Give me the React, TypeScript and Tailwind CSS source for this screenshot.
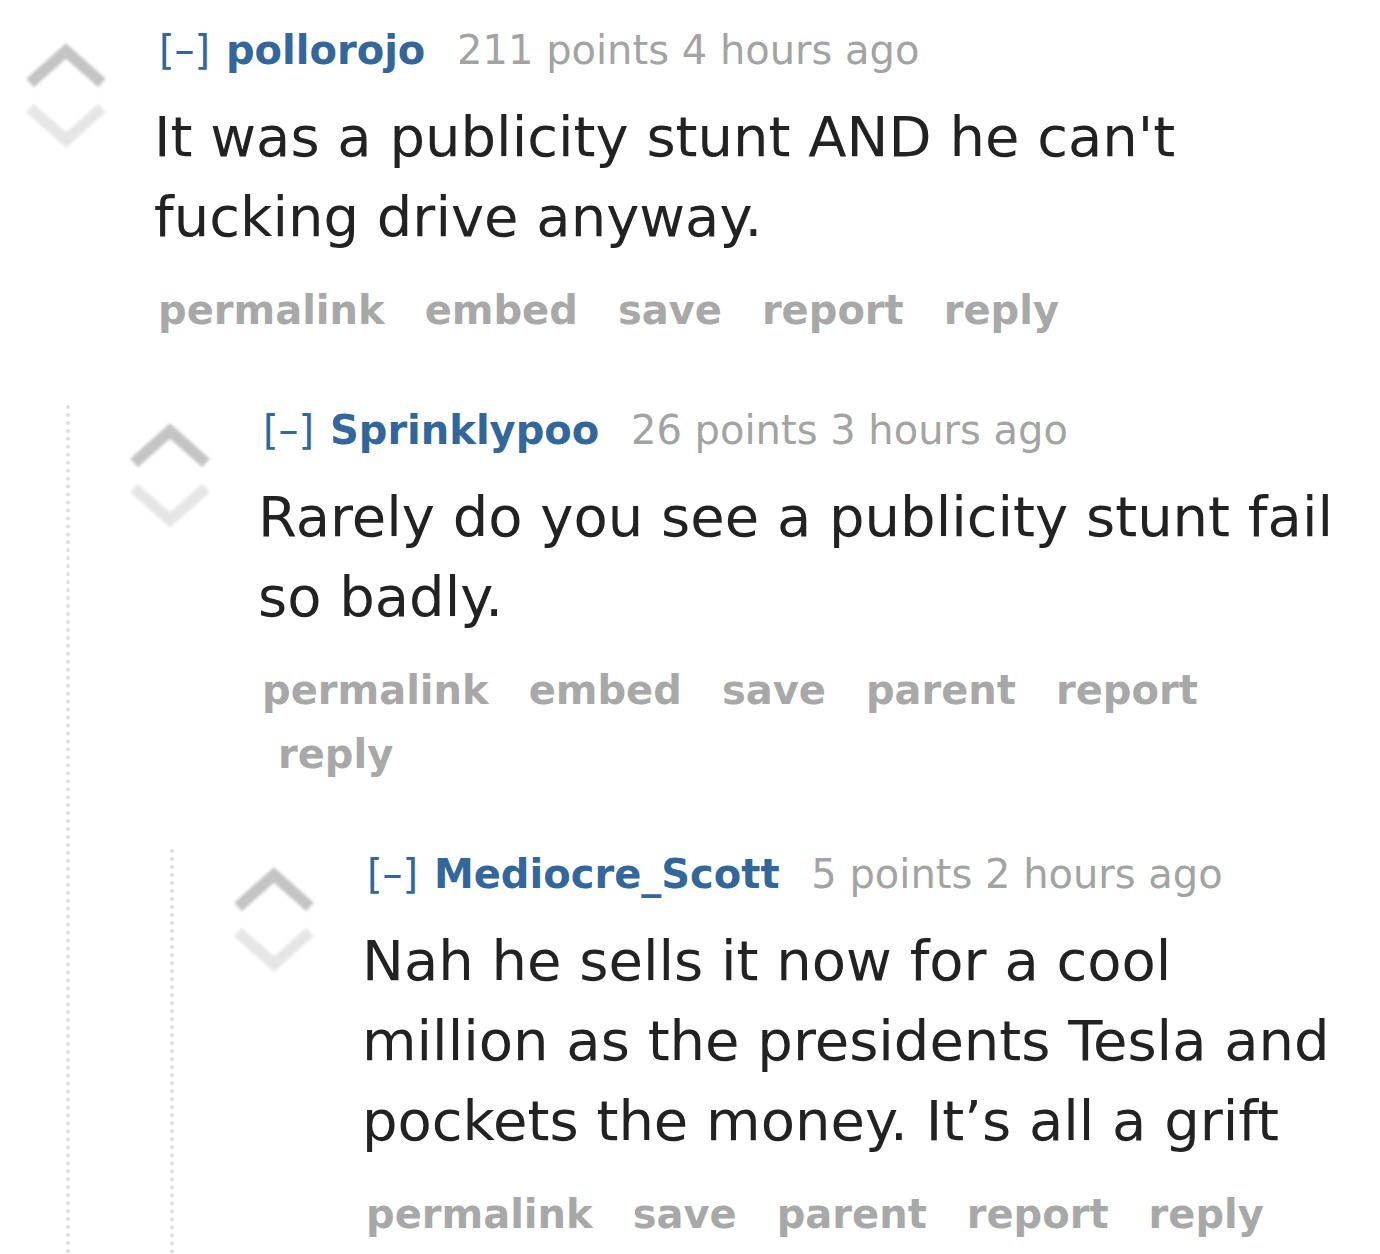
import React from "react";

const FONT = { fontFamily: '"DejaVu Sans", Verdana, sans-serif' };

function Arrows() {
  return (
    <svg
      className="ml-[23px] mt-[17px] shrink-0"
      width="86"
      height="110"
      viewBox="0 0 86 110"
      aria-hidden="true"
    >
      <defs>
        <filter id="ablur" x="-20%" y="-20%" width="140%" height="140%">
          <feGaussianBlur stdDeviation="1.4" />
        </filter>
      </defs>
      <g filter="url(#ablur)" fill="none" strokeWidth="11.5" strokeLinejoin="miter">
        <polyline points="7,41 43,9 79,41" stroke="#c4c4c4" />
        <polyline points="7,66 43,98 79,66" stroke="#e6e6e6" />
      </g>
    </svg>
  );
}

type CommentProps = {
  author: string;
  score: string;
  time: string;
  body: string;
  buttons: string[];
  children?: React.ReactNode;
};

function Comment({ author, score, time, body, buttons, children }: CommentProps) {
  return (
    <div>
      <div className="flex">
        <Arrows />
        <div className="ml-[43px] min-w-0 flex-1">
          <div className="pl-[7px] text-[40px] leading-[50px] whitespace-nowrap">
            <span className="text-[#336699]">[–]</span>{" "}
            <span className="ml-[3px] mr-[19px] font-bold text-[#336699]">{author}</span>{" "}
            <span className="text-[#a3a3a3]">
              {score} {time}
            </span>
          </div>
          <div className="mt-[22px] pl-[2px] text-[56px] leading-[80px] text-[#222222]">{body}</div>
          <div className="mt-[21px] flex flex-wrap gap-x-[24px] pl-[6px] text-[40px] leading-[64px] font-bold text-[#a8a8a8]">
            {buttons.map((b, i) => (
              <span key={b} className={i === 0 ? "" : "pl-[16px]"}>
                {b}
              </span>
            ))}
          </div>
        </div>
      </div>
      {children ? (
        <div className="ml-[66px] mt-[63px] border-l-4 border-dotted border-[#dedede] pl-[34px] pb-[8px]">
          {children}
        </div>
      ) : null}
    </div>
  );
}

export default function App() {
  return (
    <div className="min-h-[1254px] overflow-hidden bg-white pt-[25px] pr-[40px]" style={FONT}>
      <Comment
        author="pollorojo"
        score="211 points"
        time="4 hours ago"
        body="It was a publicity stunt AND he can't fucking drive anyway."
        buttons={["permalink", "embed", "save", "report", "reply"]}
      >
        <Comment
          author="Sprinklypoo"
          score="26 points"
          time="3 hours ago"
          body="Rarely do you see a publicity stunt fail so badly."
          buttons={["permalink", "embed", "save", "parent", "report", "reply"]}
        >
          <Comment
            author="Mediocre_Scott"
            score="5 points"
            time="2 hours ago"
            body="Nah he sells it now for a cool million as the presidents Tesla and pockets the money. It’s all a grift"
            buttons={["permalink", "save", "parent", "report", "reply"]}
          />
        </Comment>
      </Comment>
    </div>
  );
}
